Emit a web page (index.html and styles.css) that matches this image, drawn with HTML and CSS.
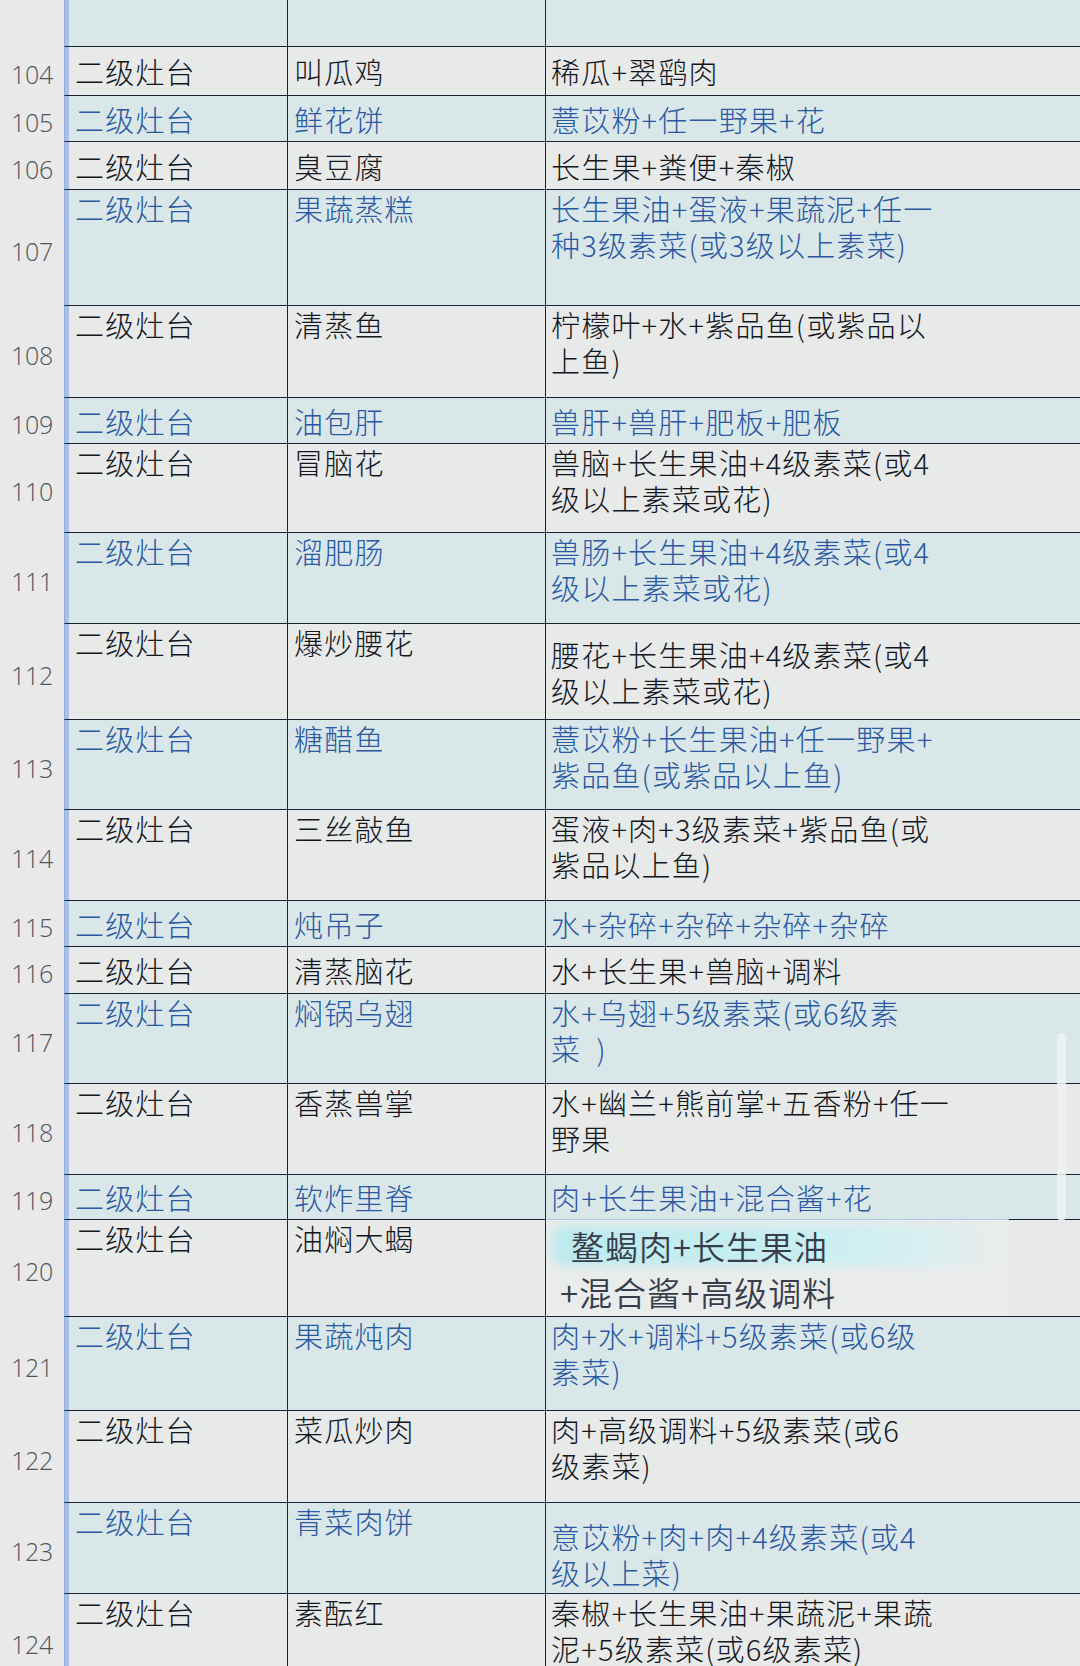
FILE: index.html
```html
<!DOCTYPE html>
<html lang="zh-CN">
<head>
<meta charset="utf-8">
<title>二级灶台</title>
<link rel="stylesheet" href="styles.css">
</head>
<body>
<div class="sheet">
  <div class="row odd one h47"><div class="num"></div><div class="stripe"></div><div class="c a"></div><div class="c b"></div><div class="c cc"></div></div>
  <div class="row even one h49"><div class="num">104</div><div class="stripe"></div><div class="c a"><span>二级灶台</span></div><div class="c b"><span>叫瓜鸡</span></div><div class="c cc"><span>稀瓜+翠鹞肉</span></div></div>
  <div class="row odd one h46"><div class="num">105</div><div class="stripe"></div><div class="c a"><span>二级灶台</span></div><div class="c b"><span>鲜花饼</span></div><div class="c cc"><span>薏苡粉+任一野果+花</span></div></div>
  <div class="row even one h48"><div class="num">106</div><div class="stripe"></div><div class="c a"><span>二级灶台</span></div><div class="c b"><span>臭豆腐</span></div><div class="c cc"><span>长生果+粪便+秦椒</span></div></div>
  <div class="row odd h116"><div class="num">107</div><div class="stripe"></div><div class="c a"><span>二级灶台</span></div><div class="c b"><span>果蔬蒸糕</span></div><div class="c cc"><span>长生果油+蛋液+果蔬泥+任一<br>种3级素菜(或3级以上素菜)</span></div></div>
  <div class="row even h92"><div class="num">108</div><div class="stripe"></div><div class="c a"><span>二级灶台</span></div><div class="c b"><span>清蒸鱼</span></div><div class="c cc"><span>柠檬叶+水+紫品鱼(或紫品以<br>上鱼)</span></div></div>
  <div class="row odd one h46"><div class="num">109</div><div class="stripe"></div><div class="c a"><span>二级灶台</span></div><div class="c b"><span>油包肝</span></div><div class="c cc"><span>兽肝+兽肝+肥板+肥板</span></div></div>
  <div class="row even h89"><div class="num">110</div><div class="stripe"></div><div class="c a"><span>二级灶台</span></div><div class="c b"><span>冒脑花</span></div><div class="c cc"><span>兽脑+长生果油+4级素菜(或4<br>级以上素菜或花)</span></div></div>
  <div class="row odd h91"><div class="num">111</div><div class="stripe"></div><div class="c a"><span>二级灶台</span></div><div class="c b"><span>溜肥肠</span></div><div class="c cc"><span>兽肠+长生果油+4级素菜(或4<br>级以上素菜或花)</span></div></div>
  <div class="row even h96"><div class="num">112</div><div class="stripe"></div><div class="c a"><span>二级灶台</span></div><div class="c b"><span>爆炒腰花</span></div><div class="c cc mid"><span>腰花+长生果油+4级素菜(或4<br>级以上素菜或花)</span></div></div>
  <div class="row odd h90"><div class="num">113</div><div class="stripe"></div><div class="c a"><span>二级灶台</span></div><div class="c b"><span>糖醋鱼</span></div><div class="c cc"><span>薏苡粉+长生果油+任一野果+<br>紫品鱼(或紫品以上鱼)</span></div></div>
  <div class="row even h91"><div class="num">114</div><div class="stripe"></div><div class="c a"><span>二级灶台</span></div><div class="c b"><span>三丝敲鱼</span></div><div class="c cc"><span>蛋液+肉+3级素菜+紫品鱼(或<br>紫品以上鱼)</span></div></div>
  <div class="row odd one h46"><div class="num">115</div><div class="stripe"></div><div class="c a"><span>二级灶台</span></div><div class="c b"><span>炖吊子</span></div><div class="c cc"><span>水+杂碎+杂碎+杂碎+杂碎</span></div></div>
  <div class="row even one h47"><div class="num">116</div><div class="stripe"></div><div class="c a"><span>二级灶台</span></div><div class="c b"><span>清蒸脑花</span></div><div class="c cc"><span>水+长生果+兽脑+调料</span></div></div>
  <div class="row odd h90"><div class="num">117</div><div class="stripe"></div><div class="c a"><span>二级灶台</span></div><div class="c b"><span>焖锅乌翅</span></div><div class="c cc"><span>水+乌翅+5级素菜(或6级素<br>菜&nbsp;&nbsp;)</span></div></div>
  <div class="row even h91"><div class="num">118</div><div class="stripe"></div><div class="c a"><span>二级灶台</span></div><div class="c b"><span>香蒸兽掌</span></div><div class="c cc"><span>水+幽兰+熊前掌+五香粉+任一<br>野果</span></div></div>
  <div class="row odd one h45"><div class="num">119</div><div class="stripe"></div><div class="c a"><span>二级灶台</span></div><div class="c b"><span>软炸里脊</span></div><div class="c cc"><span>肉+长生果油+混合酱+花</span></div></div>
  <div class="row even h97"><div class="num">120</div><div class="stripe"></div><div class="c a"><span>二级灶台</span></div><div class="c b"><span>油焖大蝎</span></div><div class="c cc patchcell">
      <div class="patch">
        <div class="glow"></div>
        <div class="pl1">鳌蝎肉+长生果油</div>
        <div class="pl2">+混合酱+高级调料</div>
      </div>
  </div></div>
  <div class="row odd h94"><div class="num">121</div><div class="stripe"></div><div class="c a"><span>二级灶台</span></div><div class="c b"><span>果蔬炖肉</span></div><div class="c cc"><span>肉+水+调料+5级素菜(或6级<br>素菜)</span></div></div>
  <div class="row even h92"><div class="num">122</div><div class="stripe"></div><div class="c a"><span>二级灶台</span></div><div class="c b"><span>菜瓜炒肉</span></div><div class="c cc"><span>肉+高级调料+5级素菜(或6<br>级素菜)</span></div></div>
  <div class="row odd h91"><div class="num">123</div><div class="stripe"></div><div class="c a"><span>二级灶台</span></div><div class="c b"><span>青菜肉饼</span></div><div class="c cc bot"><span>意苡粉+肉+肉+4级素菜(或4<br>级以上菜)</span></div></div>
  <div class="row even h95"><div class="num">124</div><div class="stripe"></div><div class="c a"><span>二级灶台</span></div><div class="c b"><span>素酝红</span></div><div class="c cc"><span>秦椒+长生果油+果蔬泥+果蔬<br>泥+5级素菜(或6级素菜)</span></div></div>
  <div class="scrollmark"></div>
</div>
</body>
</html>
```
FILE: styles.css
```css
* { box-sizing: border-box; }
html, body { margin: 0; padding: 0; }
body {
  background: #e9e9e9;
  font-family: "Noto Sans CJK SC", "Noto Sans", sans-serif;
}
.sheet {
  position: relative;
  width: 1080px;
  height: 1666px;
  overflow: hidden;
  display: flex;
  flex-direction: column;
}
.row {
  flex: none;
  display: grid;
  grid-template-columns: 64px 5px 219px 258px 1fr;
}
.h45 { height: 45px; } .h46 { height: 46px; } .h47 { height: 47px; }
.h48 { height: 48px; } .h49 { height: 49px; } .h89 { height: 89px; }
.h90 { height: 90px; } .h91 { height: 91px; } .h92 { height: 92px; }
.h94 { height: 94px; } .h95 { height: 95px; } .h96 { height: 96px; }
.h97 { height: 97px; } .h116 { height: 116px; }

.num {
  background: #e9e9e9;
  display: flex;
  align-items: center;
  justify-content: flex-end;
  padding: 5px 11px 0 0;
  font-family: "Open Sans", "Noto Sans", sans-serif;
  font-weight: 300;
  font-size: 25px;
  color: #4f545e;
  letter-spacing: -0.3px;
}
.stripe {
  background: #a9c0e8;
  border-left: 1px solid #94aedb;
  border-bottom: 1px solid #1a2232;
}
.c {
  display: flex;
  align-items: flex-start;
  border-bottom: 1px solid #1a2232;
  font-size: 29px;
  font-weight: 300;
  line-height: 36px;
  letter-spacing: 1.2px;
  padding-left: 6px;
  white-space: nowrap;
}
.c.a, .c.b { border-right: 1px solid #1a2232; }
.c.b { padding-left: 6px; }
.c.cc { padding-left: 5px; }
.one .c { align-items: center; }
.c.mid { align-items: center; }
.c.bot { align-items: flex-end; padding-bottom: 3px; }

.odd .c { background: #d9e7e9; color: #2a58a2; }
.even .c { background: #e8e9e9; color: #12161e; }

/* pasted patch over row 120, column C */
.patchcell { position: relative; }
.patch {
  position: absolute;
  left: 0;
  top: -1px;
  width: 463px;
  height: 97px;
  background: #eaecec;
  border-top: 1px solid #a9c7e6;
  color: #373d4a;
  font-size: 33px;
  font-weight: 350;
  line-height: 46px;
  letter-spacing: 1px;
  padding-top: 3px;
}
.glow {
  position: absolute;
  left: 6px;
  top: 6px;
  width: 450px;
  height: 40px;
  border-radius: 14px;
  background: linear-gradient(90deg, rgba(186,234,238,0.95) 0%, rgba(196,238,241,0.9) 55%, rgba(205,240,242,0.7) 80%, rgba(220,240,242,0) 100%);
  filter: blur(4px);
}
.pl1, .pl2 { position: relative; }
.pl1 { padding-left: 25px; }
.pl2 { padding-left: 14px; }

.scrollmark {
  position: absolute;
  left: 1057px;
  top: 1033px;
  width: 9px;
  height: 188px;
  border-radius: 5px;
  background: rgba(240, 242, 242, 0.85);
}
```
